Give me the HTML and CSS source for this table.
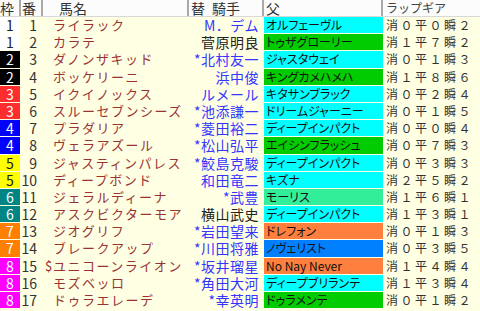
FILE: index.html
```html
<!DOCTYPE html>
<html lang="ja">
<head>
<meta charset="utf-8">
<title>出馬表</title>
<link rel="stylesheet" href="styles.css">
</head>
<body>
<div class="table">
  <div class="row head">
    <div class="h h-waku">枠</div>
    <div class="h h-num">番</div>
    <div class="h h-name">馬名</div>
    <div class="h h-jockey"><span class="kae">替</span>騎手</div>
    <div class="h h-sire">父</div>
    <div class="h h-lap">ラップギア</div>
  </div>

  <div class="row"><div class="waku w1">1</div><div class="num">1</div><div class="name"><span class="pre"></span>ライラック</div><div class="jockey">M．デム</div><div class="sire s-cyan">オルフェーヴル</div><div class="lap">消０平０瞬２</div></div>
  <div class="row"><div class="waku w1">1</div><div class="num">2</div><div class="name"><span class="pre"></span>カラテ</div><div class="jockey black">菅原明良</div><div class="sire s-green">トゥザグローリー</div><div class="lap">消１平７瞬２</div></div>
  <div class="row"><div class="waku w2">2</div><div class="num">3</div><div class="name"><span class="pre"></span>ダノンザキッド</div><div class="jockey">*北村友一</div><div class="sire s-cyan">ジャスタウェイ</div><div class="lap">消０平１瞬３</div></div>
  <div class="row"><div class="waku w2">2</div><div class="num">4</div><div class="name"><span class="pre"></span>ボッケリーニ</div><div class="jockey">浜中俊</div><div class="sire s-green">キングカメハメハ</div><div class="lap">消１平８瞬６</div></div>
  <div class="row"><div class="waku w3">3</div><div class="num">5</div><div class="name"><span class="pre"></span>イクイノックス</div><div class="jockey">ルメール</div><div class="sire s-cyan">キタサンブラック</div><div class="lap">消０平２瞬４</div></div>
  <div class="row"><div class="waku w3">3</div><div class="num">6</div><div class="name"><span class="pre"></span>スルーセブンシーズ</div><div class="jockey">*池添謙一</div><div class="sire s-cyan">ドリームジャーニー</div><div class="lap">消０平１瞬５</div></div>
  <div class="row"><div class="waku w4">4</div><div class="num">7</div><div class="name"><span class="pre"></span>プラダリア</div><div class="jockey">*菱田裕二</div><div class="sire s-cyan">ディープインパクト</div><div class="lap">消０平０瞬４</div></div>
  <div class="row"><div class="waku w4">4</div><div class="num">8</div><div class="name"><span class="pre"></span>ヴェラアズール</div><div class="jockey">*松山弘平</div><div class="sire s-green">エイシンフラッシュ</div><div class="lap">消０平７瞬３</div></div>
  <div class="row"><div class="waku w5">5</div><div class="num">9</div><div class="name"><span class="pre"></span>ジャスティンパレス</div><div class="jockey">*鮫島克駿</div><div class="sire s-cyan">ディープインパクト</div><div class="lap">消０平３瞬３</div></div>
  <div class="row"><div class="waku w5">5</div><div class="num">10</div><div class="name"><span class="pre"></span>ディープボンド</div><div class="jockey">和田竜二</div><div class="sire s-cyan">キズナ</div><div class="lap">消２平５瞬２</div></div>
  <div class="row"><div class="waku w6">6</div><div class="num">11</div><div class="name"><span class="pre"></span>ジェラルディーナ</div><div class="jockey">*武豊</div><div class="sire s-mint">モーリス</div><div class="lap">消１平６瞬１</div></div>
  <div class="row"><div class="waku w6">6</div><div class="num">12</div><div class="name"><span class="pre"></span>アスクビクターモア</div><div class="jockey black">横山武史</div><div class="sire s-cyan">ディープインパクト</div><div class="lap">消１平３瞬１</div></div>
  <div class="row"><div class="waku w7">7</div><div class="num">13</div><div class="name"><span class="pre"></span>ジオグリフ</div><div class="jockey">*岩田望来</div><div class="sire s-orange">ドレフォン</div><div class="lap">消０平１瞬３</div></div>
  <div class="row"><div class="waku w7">7</div><div class="num">14</div><div class="name"><span class="pre"></span>ブレークアップ</div><div class="jockey">*川田将雅</div><div class="sire s-blue">ノヴェリスト</div><div class="lap">消０平３瞬５</div></div>
  <div class="row"><div class="waku w8">8</div><div class="num">15</div><div class="name"><span class="pre">$</span>ユニコーンライオン</div><div class="jockey">*坂井瑠星</div><div class="sire s-orange latin">No Nay Never</div><div class="lap">消１平４瞬４</div></div>
  <div class="row"><div class="waku w8">8</div><div class="num">16</div><div class="name"><span class="pre"></span>モズベッロ</div><div class="jockey">*角田大河</div><div class="sire s-cyan">ディープブリランテ</div><div class="lap">消１平３瞬４</div></div>
  <div class="row"><div class="waku w8">8</div><div class="num">17</div><div class="name"><span class="pre"></span>ドゥラエレーデ</div><div class="jockey">*幸英明</div><div class="sire s-green">ドゥラメンテ</div><div class="lap">消０平１瞬２</div></div>
</div>
</body>
</html>
```

FILE: styles.css
```css
* { box-sizing: border-box; }

html, body {
  margin: 0;
  padding: 0;
  width: 480px;
  height: 311px;
  overflow: hidden;
  background: #ffffe4;
  font-family: "Noto Sans CJK JP", "Noto Sans", sans-serif;
}

.table {
  display: flex;
  flex-direction: column;
}

.row {
  display: grid;
  grid-template-columns: 21px 22px 146px 75px 119px 97px;
  height: 17.2px;
  padding-bottom: 1px;
}

.row.head {
  height: 17px;
  background: #fcfcfc;
  border-bottom: 1px solid #d8d8d8;
  padding-bottom: 0;
}

.h {
  font-size: 14px;
  line-height: 16px;
  color: #333;
  border-right: 2px solid #a9a9a9;
  white-space: nowrap;
}

.h-waku { padding-left: 0; border-right-width: 2px; }
.h-num { padding-left: 1px; }
.h-name { padding-left: 16px; letter-spacing: 0; }
.h-jockey { padding-left: 2px; border-right-width: 2px; }
.h-jockey .kae { margin-right: 7px; }
.h-sire { padding-left: 2px; }
.h-lap {
  border-right: none;
  font-size: 12px;
  padding-left: 3px;
  color: #444;
}

.waku {
  margin-right: 1px;
  font-size: 14px;
  line-height: 16px;
  text-align: center;
  color: #fff;
}
.w1 { background: #ffffff; color: #222; }
.w2 { background: #000000; color: #fff; }
.w3 { background: #ff2d2d; color: #fff; }
.w4 { background: #0000ff; color: #fff; }
.w5 { background: #ffff00; color: #222; }
.w6 { background: #008484; color: #fff; }
.w7 { background: #ff8000; color: #fff; }
.w8 { background: #ff00ff; color: #fff; }

.num {
  font-size: 14px;
  line-height: 16px;
  text-align: right;
  padding-right: 6px;
  color: #333;
}

.name {
  font-size: 13px;
  line-height: 16px;
  letter-spacing: 1.5px;
  color: #993333;
  white-space: nowrap;
  overflow: visible;
  padding-left: 2px;
}
.pre {
  display: inline-block;
  width: 8px;
  letter-spacing: 0;
}

.jockey {
  font-size: 14px;
  line-height: 16px;
  letter-spacing: 0.5px;
  color: #3535ff;
  text-align: right;
  padding-right: 4px;
  white-space: nowrap;
  border-right: 1px solid transparent;
}
.jockey.black { color: #222; }

.sire {
  font-size: 12px;
  line-height: 16px;
  font-feature-settings: "palt" 1;
  padding-left: 2px;
  color: #111;
  white-space: nowrap;
  overflow: hidden;
}
.s-cyan { background: #00ffff; }
.s-green { background: #00cc00; }
.s-mint { background: #33ee99; }
.s-orange { background: #ff7f3f; }
.s-blue { background: #0080ff; }
.sire.latin { font-size: 12px; }

.lap {
  font-size: 12px;
  line-height: 16px;
  letter-spacing: 2.5px;
  color: #333;
  padding-left: 3px;
  white-space: nowrap;
}
```
